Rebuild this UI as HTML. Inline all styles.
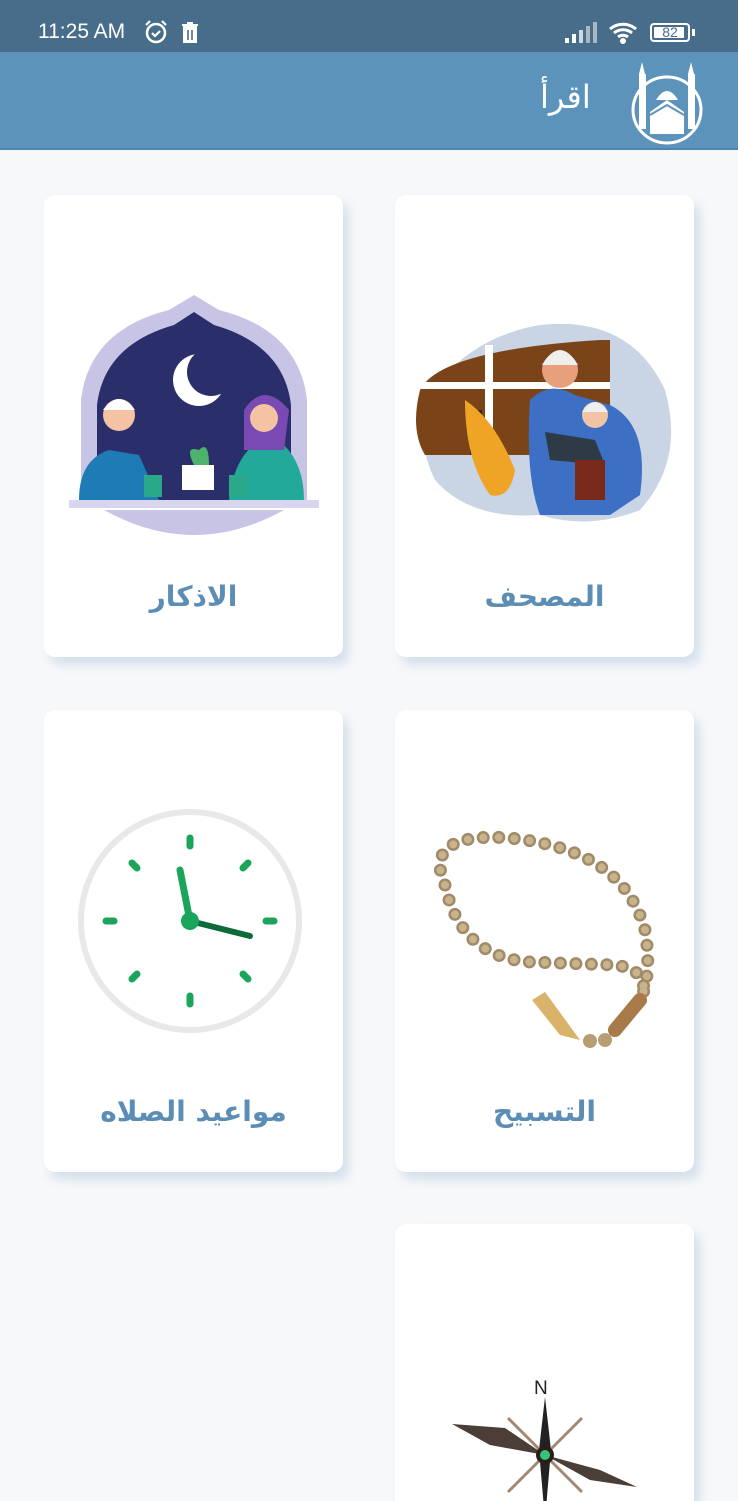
<!DOCTYPE html>
<html style="width:738px;height:1501px;overflow:hidden"><head><meta charset="utf-8"><style>
*{margin:0;padding:0;box-sizing:border-box}
body{width:738px;height:1501px;overflow:hidden;background:#f7f8fa;font-family:"Liberation Sans","DejaVu Sans",sans-serif;position:relative}
.sb{position:absolute;left:0;top:0;width:738px;height:52px;background:#476d8a;color:#fff}
.ab{position:absolute;left:0;top:52px;width:738px;height:98px;background:#5b93bb;border-bottom:2px solid #4f86ae}
.card{position:absolute;width:299px;height:462px;background:#fff;border-radius:11px;box-shadow:6px 8px 10px rgba(150,180,210,.35);overflow:hidden}
.lbl{position:absolute;left:0;width:100%;top:385px;text-align:center;color:#5b8db5;font-weight:bold;font-size:28px;font-family:"DejaVu Sans",sans-serif}
svg{position:absolute}
</style></head><body>
<div class="sb">
<span style="position:absolute;left:38px;top:20px;font-size:21px">11:25 AM</span>
<svg style="left:143px;top:19px" width="26" height="26" viewBox="0 0 26 26"><circle cx="13" cy="14" r="9" fill="none" stroke="#fff" stroke-width="2.5"/><path d="M9 14l3 3 5-5M3 6l4-4M23 6l-4-4" stroke="#fff" stroke-width="2.2" fill="none"/></svg>
<svg style="left:181px;top:22px" width="18" height="22" viewBox="0 0 18 22"><path d="M1 3h16M6 1h6M3 5h12v15H3z" stroke="#fff" stroke-width="2" fill="#fff"/><path d="M7 8v10M11 8v10" stroke="#476d8a" stroke-width="1.6"/></svg>
<svg style="left:564px;top:22px" width="36" height="22" viewBox="0 0 36 22"><rect x="1" y="16" width="4" height="5" fill="#fff"/><rect x="8" y="12" width="4" height="9" fill="#fff"/><rect x="15" y="8" width="4" height="13" fill="#cfd8df"/><rect x="22" y="4" width="4" height="17" fill="#a9b8c4"/><rect x="29" y="0" width="4" height="21" fill="#a9b8c4"/></svg>
<svg style="left:608px;top:20px" width="32" height="26" viewBox="0 0 32 26"><path d="M2 9a20 20 0 0 1 26 0M6 13a14 14 0 0 1 18 0M10 17a8 8 0 0 1 10 0" stroke="#fff" stroke-width="3" fill="none"/><circle cx="15" cy="21" r="3" fill="#fff"/></svg>
<div style="position:absolute;left:650px;top:23px;width:40px;height:19px;border:2px solid #fff;border-radius:4px;font-size:14px;line-height:15px;text-align:center;color:#476d8a"><div style="position:absolute;left:2px;top:2px;width:30px;height:11px;background:#fff;border-radius:1px"></div><span style="position:relative">82</span></div>
<div style="position:absolute;left:692px;top:29px;width:3px;height:7px;background:#fff"></div>
</div>
<div class="ab">
<span style="position:absolute;left:540px;top:26px;font-size:32px;color:#fff;font-family:'DejaVu Sans',sans-serif">اقرأ</span>
<svg style="left:628px;top:8px" width="78" height="86" viewBox="0 0 78 86"><ellipse cx="39" cy="50" rx="34" ry="33" fill="none" stroke="#fff" stroke-width="3"/><rect x="11" y="14" width="7" height="55" fill="#fff"/><rect x="60" y="14" width="7" height="55" fill="#fff"/><path d="M14 2l3 12h-6zM63 2l3 12h-6z" fill="#fff"/><path d="M28 40q11-18 22 0z" fill="#fff"/><path d="M22 52l17-12 17 12v22H22z" fill="#fff"/><path d="M22 55l17-10 17 10" stroke="#5b93bb" stroke-width="2" fill="none"/></svg>
</div>

<div class="card" style="left:395px;top:195px">
<svg style="left:15px;top:125px" width="270" height="210" viewBox="0 0 270 210">
<path d="M30 60Q70 15 130 5Q220 -5 255 70Q275 140 230 190Q180 210 130 195Q60 200 25 160Q0 110 30 60z" fill="#c9d4e4"/>
<path d="M10 70Q30 30 190 20L200 20 200 135 15 135Q0 110 10 70z" fill="#7a4418"/>
<rect x="75" y="25" width="8" height="110" fill="#fff"/><rect x="10" y="62" width="190" height="7" fill="#fff"/>
<rect x="60" y="90" width="12" height="45" fill="#3a2a1e"/>
<path d="M55 80 Q85 100 105 150 Q100 180 80 175 Q55 140 55 80z" fill="#f0a425"/>
<path d="M120 80q20-20 45-5l35 10q40 20 30 90l-30 20h-70q-15-40-10-115z" fill="#3d6fc4"/>
<circle cx="150" cy="50" r="18" fill="#e8a07c"/><path d="M132 45q18-30 36 0z" fill="#eee"/>
<circle cx="185" cy="95" r="13" fill="#f1c4a5"/><path d="M172 92q13-20 26 0z" fill="#eee"/>
<path d="M135 112l50 8 10 25-55-5z" fill="#2e3a45"/><rect x="165" y="140" width="30" height="40" fill="#7a2a1a"/>
</svg>
<div class="lbl">المصحف</div></div>

<div class="card" style="left:44px;top:195px">
<svg style="left:25px;top:95px" width="250" height="270" viewBox="0 0 250 270">
<path d="M12 215V110Q20 40 100 20L125 5 150 20Q230 40 238 110V215z" fill="#c8c4e6"/>
<path d="M28 215V115Q35 55 105 35L125 22 145 35Q215 55 222 115V215z" fill="#2a2e6b"/>
<circle cx="130" cy="90" r="26" fill="#fff"/><circle cx="142" cy="82" r="24" fill="#2a2e6b"/>
<path d="M35 220q90 50 180 0z" fill="#c8c4e6"/><rect x="0" y="210" width="250" height="8" fill="#d8d5ee"/>
<path d="M10 210q0-40 30-50l30 5 20 45z" fill="#1f7bb6"/><circle cx="50" cy="125" r="16" fill="#f3c3a3"/><path d="M34 120q16-22 32 0z" fill="#fff"/>
<path d="M160 210q5-40 25-55l30 0q20 20 20 55z" fill="#23a999"/><path d="M175 120q20-30 45 0l-5 40h-40z" fill="#7a4ab4"/><circle cx="195" cy="128" r="14" fill="#f3c3a3"/>
<rect x="113" y="175" width="32" height="25" fill="#fff"/><path d="M125 175q-10-20 5-15 10-10 10 15" fill="#4cb36d"/>
<rect x="75" y="185" width="18" height="22" fill="#2aa88a"/><rect x="160" y="185" width="18" height="22" fill="#2aa88a"/>
</svg>
<div class="lbl">الاذكار</div></div>

<div class="card" style="left:395px;top:710px">
<svg style="left:0;top:0" width="299" height="350" viewBox="395 710 299 350">
<path d="M445 885C425 840 470 835 510 838C575 845 628 868 645 930C650 960 648 985 640 1000M445 885C455 930 480 958 530 962L615 965C638 968 650 980 640 1000" fill="none" stroke="#a08a67" stroke-width="13" stroke-dasharray="0 15.5" stroke-linecap="round"/>
<path d="M445 885C425 840 470 835 510 838C575 845 628 868 645 930C650 960 648 985 640 1000M445 885C455 930 480 958 530 962L615 965C638 968 650 980 640 1000" fill="none" stroke="#c9b38c" stroke-width="8" stroke-dasharray="0 15.5" stroke-linecap="round"/>
<path d="M640 1000L615 1030" stroke="#a87a4a" stroke-width="14" stroke-linecap="round"/>
<circle cx="605" cy="1040" r="7" fill="#b89d74"/><circle cx="590" cy="1041" r="7" fill="#b89d74"/>
<path d="M580 1040L545 992L532 1000L560 1035z" fill="#dab36a"/>
</svg>
<div class="lbl">التسبيح</div></div>

<div class="card" style="left:44px;top:710px">
<svg style="left:0;top:0" width="299" height="350" viewBox="44 710 299 350">
<circle cx="190" cy="921" r="109" fill="#fff" stroke="#e8e8e8" stroke-width="6"/>
<g stroke="#1aa55a" stroke-width="7" stroke-linecap="round">
<path d="M190 838v8M190 996v8M106 921h8M266 921h8M132 863l5 5M243 974l5 5M248 863l-5 5M132 979l5-5"/>
<path d="M190 921L180 870"/></g>
<path d="M190 921L250 936" stroke="#0d6b3a" stroke-width="6" stroke-linecap="round"/>
<circle cx="190" cy="921" r="9" fill="#1aa55a"/>
</svg>
<div class="lbl">مواعيد الصلاه</div></div>

<div class="card" style="left:395px;top:1224px;height:277px;border-radius:11px 11px 0 0">
<svg style="left:0;top:0" width="299" height="277" viewBox="395 1224 299 277">
<path d="M452 1424L505 1428L545 1455L600 1470L637 1487L590 1480L545 1455L490 1445z" fill="#4a3e36"/>
<path d="M545 1397L551 1450L545 1520L539 1450z" fill="#222"/>
<path d="M508 1418L582 1492M582 1418L508 1492" stroke="#a08a72" stroke-width="3"/>
<circle cx="545" cy="1455" r="9" fill="#2a1f18"/><circle cx="545" cy="1455" r="5" fill="#35c27a"/>
<text x="534" y="1394" font-size="19" fill="#222" font-family="Liberation Sans">N</text>
</svg>
</div>
</body></html>
